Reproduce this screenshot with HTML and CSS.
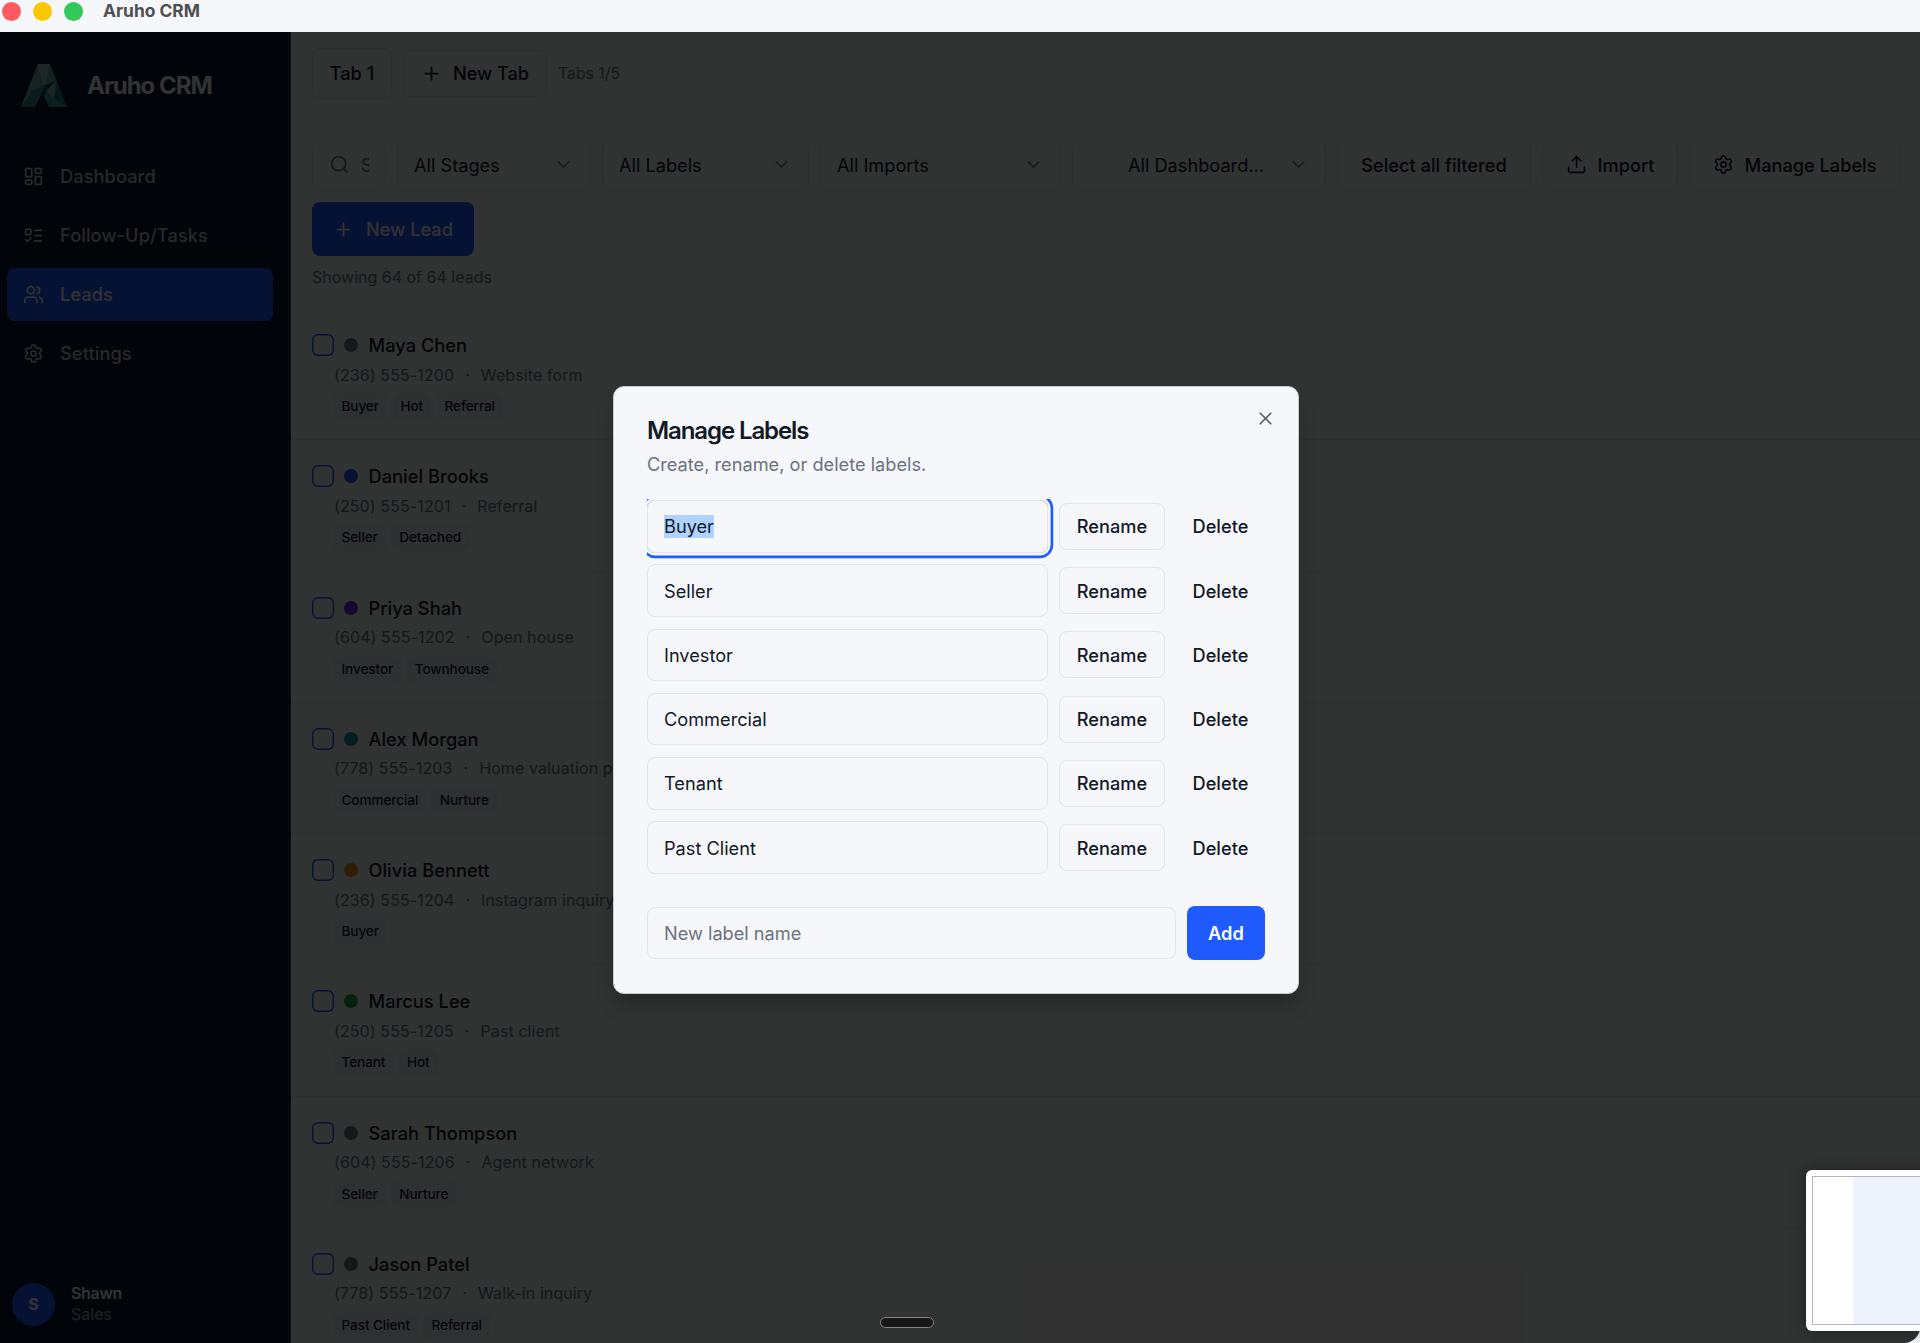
FILE: index.html
```html
<!DOCTYPE html>
<html lang="en">
<head>
  <meta charset="UTF-8">
  <meta name="viewport" content="width=device-width, initial-scale=1.0">
  <title>Aruho CRM</title>
  <link rel="stylesheet" href="styles.css">
</head>
<body>
  <!-- Icon sprite -->
  <svg class="sprite" xmlns="http://www.w3.org/2000/svg">
    <symbol id="i-dashboard" viewBox="0 0 24 24"><rect width="7" height="9" x="3" y="3" rx="1"/><rect width="7" height="5" x="14" y="3" rx="1"/><rect width="7" height="9" x="14" y="12" rx="1"/><rect width="7" height="5" x="3" y="16" rx="1"/></symbol>
    <symbol id="i-tasks" viewBox="0 0 24 24"><rect x="3" y="5" width="6" height="6" rx="1"/><path d="m3 17 2 2 4-4"/><path d="M13 6h8"/><path d="M13 12h8"/><path d="M13 18h8"/></symbol>
    <symbol id="i-users" viewBox="0 0 24 24"><path d="M16 21v-2a4 4 0 0 0-4-4H6a4 4 0 0 0-4 4v2"/><circle cx="9" cy="7" r="4"/><path d="M22 21v-2a4 4 0 0 0-3-3.87"/><path d="M16 3.13a4 4 0 0 1 0 7.75"/></symbol>
    <symbol id="i-settings" viewBox="0 0 24 24"><path d="M9.671 4.136a2.34 2.34 0 0 1 4.659 0 2.34 2.34 0 0 0 3.319 1.915 2.34 2.34 0 0 1 2.33 4.033 2.34 2.34 0 0 0 0 3.831 2.34 2.34 0 0 1-2.33 4.033 2.34 2.34 0 0 0-3.319 1.915 2.34 2.34 0 0 1-4.659 0 2.34 2.34 0 0 0-3.32-1.915 2.34 2.34 0 0 1-2.33-4.033 2.34 2.34 0 0 0 0-3.831A2.34 2.34 0 0 1 6.35 6.051a2.34 2.34 0 0 0 3.319-1.915"/><circle cx="12" cy="12" r="3"/></symbol>
    <symbol id="i-plus" viewBox="0 0 24 24"><path d="M5 12h14"/><path d="M12 5v14"/></symbol>
    <symbol id="i-search" viewBox="0 0 24 24"><circle cx="11" cy="11" r="8"/><path d="m21 21-4.3-4.3"/></symbol>
    <symbol id="i-chevron" viewBox="0 0 24 24"><path d="m6 9 6 6 6-6"/></symbol>
    <symbol id="i-upload" viewBox="0 0 24 24"><path d="M12 3v12"/><path d="m17 8-5-5-5 5"/><path d="M21 15v4a2 2 0 0 1-2 2H5a2 2 0 0 1-2-2v-4"/></symbol>
    <symbol id="i-close" viewBox="0 0 24 24"><path d="M18 6 6 18"/><path d="m6 6 12 12"/></symbol>
  </svg>

  <!-- Title bar -->
  <div class="titlebar">
    <span class="light red"></span>
    <span class="light yellow"></span>
    <span class="light green"></span>
    <span class="window-title">Aruho CRM</span>
  </div>

  <div class="app">
    <!-- Sidebar -->
    <aside class="sidebar">
      <div class="brand">
        <svg class="logo" viewBox="0 0 46 43">
          <polygon points="17,0 29,0 46,43 0,43" fill="#3c999b"/>
          <polygon points="17,0 22,22 0,43" fill="#71a8a4"/>
          <polygon points="17,0 29,0 25,20 22,22" fill="#a0bcb7"/>
          <polygon points="29,0 35,17 25,21" fill="#62a39f"/>
          <polygon points="0,43 12,26 25,20 14,43" fill="#2d878b"/>
          <polygon points="25,21 35,17 22,33" fill="#0f4856"/>
          <polygon points="35,17 46,43 33,34" fill="#22747e"/>
          <polygon points="35,17 33,34 25,27" fill="#96bfb9"/>
          <polygon points="25,21 22,31 28,43 14,43" fill="#061430"/>
        </svg>
        <span class="brand-name">Aruho CRM</span>
      </div>
      <nav class="nav">
        <a class="nav-item"><svg class="icon"><use href="#i-dashboard"/></svg>Dashboard</a>
        <a class="nav-item"><svg class="icon"><use href="#i-tasks"/></svg>Follow-Up/Tasks</a>
        <a class="nav-item active"><svg class="icon"><use href="#i-users"/></svg>Leads</a>
        <a class="nav-item"><svg class="icon"><use href="#i-settings"/></svg>Settings</a>
      </nav>
      <div class="account">
        <span class="avatar">S</span>
        <div>
          <div class="account-name">Shawn</div>
          <div class="account-role">Sales</div>
        </div>
      </div>
    </aside>

    <!-- Main -->
    <main class="main">
      <div class="tabs">
        <div class="tab">Tab 1</div>
        <div class="tab new-tab"><svg class="icon"><use href="#i-plus"/></svg>New Tab</div>
        <span class="tab-count">Tabs 1/5</span>
      </div>

      <div class="toolbar">
        <div class="filters">
          <div class="field search"><svg class="icon"><use href="#i-search"/></svg><span class="search-text">S</span></div>
          <div class="field stages">All Stages<svg class="icon"><use href="#i-chevron"/></svg></div>
          <div class="field labels">All Labels<svg class="icon"><use href="#i-chevron"/></svg></div>
          <div class="field imports">All Imports<svg class="icon"><use href="#i-chevron"/></svg></div>
          <div class="field dashboards"><span>All Dashboard...</span><svg class="icon"><use href="#i-chevron"/></svg></div>
          <div class="field action select-all">Select all filtered</div>
          <div class="field action import"><svg class="icon"><use href="#i-upload"/></svg>Import</div>
          <div class="field action manage"><svg class="icon"><use href="#i-settings"/></svg>Manage Labels</div>
        </div>
        <div class="new-lead"><svg class="icon"><use href="#i-plus"/></svg>New Lead</div>
        <div class="count">Showing 64 of 64 leads</div>
      </div>

      <div id="leads" class="leads"></div>
    </main>

    <div class="overlay"></div>

    <!-- Manage labels dialog -->
    <div class="dialog">
      <svg class="icon close"><use href="#i-close"/></svg>
      <h2>Manage Labels</h2>
      <p>Create, rename, or delete labels.</p>
      <div id="labels" class="label-list"></div>
      <div class="add-row">
        <div class="input placeholder">New label name</div>
        <button class="add">Add</button>
      </div>
    </div>

    <div class="pill"></div>
    <div class="preview"><div class="preview-page"></div></div>
  </div>

  <script>
    const leads = [
      { name: "Maya Chen", phone: "(236) 555-1200", source: "Website form", color: "gray", tags: ["Buyer", "Hot", "Referral"] },
      { name: "Daniel Brooks", phone: "(250) 555-1201", source: "Referral", color: "blue", tags: ["Seller", "Detached"] },
      { name: "Priya Shah", phone: "(604) 555-1202", source: "Open house", color: "purple", tags: ["Investor", "Townhouse"] },
      { name: "Alex Morgan", phone: "(778) 555-1203", source: "Home valuation page", color: "teal", tags: ["Commercial", "Nurture"] },
      { name: "Olivia Bennett", phone: "(236) 555-1204", source: "Instagram inquiry", color: "amber", tags: ["Buyer"] },
      { name: "Marcus Lee", phone: "(250) 555-1205", source: "Past client", color: "green", tags: ["Tenant", "Hot"] },
      { name: "Sarah Thompson", phone: "(604) 555-1206", source: "Agent network", color: "gray", tags: ["Seller", "Nurture"] },
      { name: "Jason Patel", phone: "(778) 555-1207", source: "Walk-in inquiry", color: "gray", tags: ["Past Client", "Referral"] }
    ];
    const labels = ["Buyer", "Seller", "Investor", "Commercial", "Tenant", "Past Client"];

    // Lead rows
    document.getElementById("leads").innerHTML = leads.map(lead => `
      <div class="lead">
        <div class="lead-head">
          <span class="checkbox"></span>
          <span class="dot dot-${lead.color}"></span>
          <span class="lead-name">${lead.name}</span>
        </div>
        <div class="lead-info"><span>${lead.phone}</span><span class="sep">·</span><span>${lead.source}</span></div>
        <div class="tags">${lead.tags.map(tag => `<span class="tag">${tag}</span>`).join("")}</div>
      </div>
    `).join("");

    // Label rows, the first one is being edited
    document.getElementById("labels").innerHTML = labels.map((label, i) => `
      <div class="label-row">
        <div class="input${i === 0 ? " focused" : ""}"><span>${label}</span></div>
        <button class="rename">Rename</button>
        <button class="delete">Delete</button>
      </div>
    `).join("");
  </script>
</body>
</html>
```
FILE: styles.css
```css
/* Global Styles */
* {
  box-sizing: border-box;
}

body {
  margin: 0;
  height: 1343px;
  overflow: hidden;
  background: #1c1c1a;
  color: #111827;
  font-family: Inter, "Liberation Sans", sans-serif;
  font-size: 18.2px;
  line-height: 26px;
}

.sprite {
  display: none;
}

.icon {
  width: 21px;
  height: 21px;
  flex: none;
  fill: none;
  stroke: currentColor;
  stroke-width: 2;
  stroke-linecap: round;
  stroke-linejoin: round;
}

/* Title bar */
.titlebar {
  display: flex;
  height: 32px;
  padding: 0 0 10px 2px;
  align-items: center;
  gap: 12px;
  background: #f6f7fb;
}

.light {
  width: 19px;
  height: 19px;
  border-radius: 50%;
}

.red { background: #ff5a5f; }
.yellow { background: #fac800; }
.green { background: #34c759; }

.window-title {
  margin-left: 8px;
  color: #4f4f51;
  font-size: 17.4px;
  font-weight: 700;
}

/* App */
.app {
  position: relative;
  display: flex;
  height: 1311px;
  overflow: hidden;
}

/* Sidebar */
.sidebar {
  display: flex;
  flex-direction: column;
  width: 291px;
  background: #061430;
  border-right: 1px solid #46506a;
  color: #c4c6cb;
}

.brand {
  display: flex;
  align-items: center;
  gap: 20px;
  height: 107px;
  padding-left: 21px;
}

.logo {
  width: 46px;
  height: 43px;
}

.brand-name {
  color: #f6f7fb;
  font-size: 24px;
  font-weight: 700;
  letter-spacing: -1px;
}

.nav {
  display: flex;
  flex-direction: column;
  gap: 6px;
  padding: 11px 17px 0 7px;
}

.nav-item {
  display: flex;
  align-items: center;
  gap: 16px;
  height: 53px;
  padding: 0 0 1px 16px;
  border-radius: 8px;
  font-weight: 500;
  letter-spacing: 0.1px;
}

.nav-item.active {
  background: #1f5aff;
  color: #f6f7fb;
}

.account {
  display: flex;
  align-items: center;
  gap: 16px;
  height: 83px;
  margin-top: auto;
  padding: 4px 12px 0;
  border-top: 1px solid #1c2944;
  font-size: 16px;
  line-height: 21px;
}

.avatar {
  display: flex;
  align-items: center;
  justify-content: center;
  width: 43px;
  height: 43px;
  border-radius: 50%;
  background: #1f5aff;
  color: #f6f7fb;
  font-weight: 700;
}

.account-name {
  color: #f6f7fb;
  font-weight: 600;
  letter-spacing: -0.3px;
}

.account-role {
  color: #a0a5b0;
}

/* Tabs */
.main {
  flex: 1;
  min-width: 0;
  background: #f6f7fb;
}

.tabs {
  display: flex;
  align-items: center;
  gap: 11px;
  height: 84px;
  padding-left: 21px;
  border-bottom: 1px solid #e4e6ea;
}

.tab {
  display: flex;
  align-items: center;
  justify-content: center;
  width: 80px;
  height: 51px;
  padding-bottom: 1px;
  border: 1px solid #e4e6ea;
  border-radius: 8px;
  font-weight: 500;
}

.new-tab {
  gap: 11px;
  width: 144px;
  height: 47px;
}

.tab-count {
  color: #6b7280;
  font-size: 15.8px;
}

/* Toolbar */
.toolbar {
  height: 193px;
  padding: 23px 20px 0 21px;
  border-bottom: 1px solid #e4e6ea;
}

.filters {
  display: flex;
  gap: 11px;
}

.field {
  display: flex;
  align-items: center;
  justify-content: space-between;
  height: 52px;
  padding: 0 16px 1px;
  border: 1px solid #e4e6ea;
  border-radius: 9px;
  white-space: nowrap;
}

.field .icon {
  stroke-width: 1.8;
}

.stages .icon,
.labels .icon,
.imports .icon,
.dashboards .icon {
  color: #7b808b;
}

.search {
  width: 74px;
  color: #6b7280;
}

.search-text {
  width: 8px;
  overflow: hidden;
}

.stages { width: 194px; }
.labels { width: 207px; }
.imports { width: 241px; }
.dashboards { width: 254px; }

.dashboards span {
  margin-left: 39px;
}

.action {
  justify-content: center;
  gap: 11px;
  font-weight: 500;
}

.select-all { width: 194px; }
.import { width: 136px; }
.manage { width: 211px; }

.new-lead {
  display: flex;
  align-items: center;
  justify-content: center;
  gap: 12px;
  width: 162px;
  height: 54px;
  margin-top: 11px;
  border-radius: 8px;
  background: #1f5aff;
  color: #f6f7fb;
  font-weight: 500;
}

.count {
  margin-top: 8px;
  color: #6b7280;
  font-size: 16px;
}

/* Leads */
.lead {
  height: 131.25px;
  padding: 23px 0 0 21px;
  border-bottom: 1px solid #e4e6ea;
}

.lead-head {
  display: flex;
  align-items: center;
}

.checkbox {
  width: 22px;
  height: 22px;
  border-radius: 6px;
  box-shadow: inset 0 0 0 1.4px #1f5aff;
}

.dot {
  width: 14px;
  height: 14px;
  margin: 0 10.5px 0 10px;
  border-radius: 50%;
}

.dot-gray { background: #6b7280; }
.dot-blue { background: #1f5aff; }
.dot-purple { background: #7c22ec; }
.dot-teal { background: #1a8ea0; }
.dot-amber { background: #f5921b; }
.dot-green { background: #22a045; }

.lead-name {
  font-weight: 500;
  letter-spacing: 0.05px;
}

.lead-info {
  display: flex;
  gap: 11px;
  margin: 4.5px 0 0 22px;
  color: #6b7280;
  font-size: 16px;
  line-height: 24px;
  letter-spacing: 0.1px;
}

.tags {
  display: flex;
  gap: 6px;
  margin: 7.5px 0 0 22px;
}

.tag {
  height: 25px;
  padding: 0 8px 0 7.5px;
  border-radius: 5px;
  background: #ebf0f8;
  font-size: 13.6px;
  font-weight: 500;
  line-height: 25px;
  letter-spacing: -0.1px;
}

.overlay {
  position: absolute;
  inset: 0;
  border-radius: 0 0 16px 0;
  background: rgba(0, 0, 0, 0.8);
}

/* Dialog */
.dialog {
  position: absolute;
  left: 613px;
  top: 354px;
  width: 686px;
  height: 607.5px;
  padding: 31px 33px 0;
  border: 1px solid #c9cacd;
  border-radius: 11px;
  background: #f6f7fb;
  box-shadow: 0 13px 20px -4px rgba(0, 0, 0, 0.25);
}

.dialog h2 {
  margin: 0;
  font-size: 24px;
  font-weight: 600;
  line-height: 26px;
  letter-spacing: -1.1px;
}

.dialog p {
  margin: 7px 0 22px;
  color: #6b7280;
}

.close {
  position: absolute;
  top: 21px;
  right: 22px;
  color: #5b6069;
}

.label-list {
  display: flex;
  flex-direction: column;
  gap: 11.75px;
  height: 376px;
  padding-top: 1px;
  overflow: hidden;
}

.label-row {
  display: flex;
  align-items: center;
  gap: 11px;
}

.input {
  display: flex;
  align-items: center;
  flex: 1;
  height: 52.5px;
  padding: 0 16px;
  border: 1px solid #e3e5e9;
  border-radius: 8px;
}

.input.focused {
  box-shadow: 0 0 0 2.6px #f6f7fb, 0 0 0 5.2px #1f5aff;
}

.focused span {
  background: #aed4ff;
  line-height: 23px;
}

.placeholder {
  color: #6b7280;
}

button {
  padding: 0;
  border: 1px solid transparent;
  border-radius: 8px;
  background: none;
  color: #111827;
  font: inherit;
  font-weight: 500;
  letter-spacing: 0.05px;
}

.rename {
  width: 106px;
  height: 47px;
  border-color: #e3e5e9;
}

.delete {
  width: 89px;
  height: 47px;
}

.add-row {
  display: flex;
  align-items: center;
  gap: 11px;
  margin-top: 31px;
}

.add {
  width: 78px;
  height: 54px;
  background: #1f5aff;
  color: #fff;
  font-weight: 600;
}

/* Drag handle and screenshot preview */
.pill {
  position: absolute;
  left: 880px;
  top: 1285px;
  width: 54px;
  height: 11px;
  border: 1px solid #858585;
  border-radius: 6px;
  background: #171717;
}

.preview {
  position: absolute;
  left: 1806px;
  top: 1138px;
  width: 130px;
  height: 161px;
  padding: 6px;
  border-radius: 6px;
  background: #fff;
  box-shadow: 0 0 18px rgba(0, 0, 0, 0.35);
}

.preview-page {
  height: 149px;
  border: 1px solid #b5b5b5;
  background: linear-gradient(to right, #fff 40px, #eef3fd 40px);
}
```
